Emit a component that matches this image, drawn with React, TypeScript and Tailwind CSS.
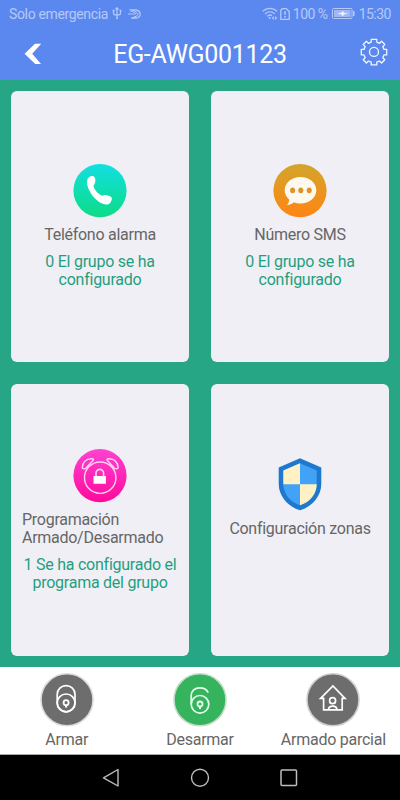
import type { ReactNode } from "react";

const PhoneIcon = () => (
  <svg className="h-[54px] w-[54px]" viewBox="0 0 54 54">
    <defs>
      <linearGradient id="phoneBg" x1="0" y1="0" x2="0" y2="1">
        <stop offset="0" stopColor="#12dfe0" />
        <stop offset="1" stopColor="#0ddc86" />
      </linearGradient>
    </defs>
    <circle cx="27" cy="26.6" r="26.6" fill="url(#phoneBg)" />
    <path
      d="M15.900 13.200c1.700-1.400 4.600-1.600 5.700 0 1.100 1.700.9 4.700.2 6.400-.3 1-1.300 1.500-1.300 2.300.5 3.300 4.500 7.900 8.100 9.600 1.300.6 2-.7 3.300-.6 2.400.1 5.700 1 6.700 2.600.9 1.500-.6 5.300-2.700 6.500-2.800 1.500-7.800-.5-10.800-2.700-5.300-3.900-10-11.200-11-17.200-.4-2.800 0-5.300 1.800-6.900z"
      fill="#fff"
    />
  </svg>
);

const SmsIcon = () => (
  <svg className="h-[54px] w-[54px]" viewBox="0 0 54 54">
    <defs>
      <linearGradient id="smsBg" x1="0" y1="0" x2="0" y2="1">
        <stop offset="0" stopColor="#d3a52c" />
        <stop offset="1" stopColor="#ff8512" />
      </linearGradient>
    </defs>
    <circle cx="27" cy="26.6" r="26.6" fill="url(#smsBg)" />
    <path
      d="M27.500 13c8.700 0 15.800 5.600 15.800 13.200s-7.100 13.300-15.800 13.300c-2.500 0-4.700-.4-6.700-1.200-1.900 1.800-4.300 2.700-6.800 2.800 1.500-1.600 2.200-3.500 2.100-5.600-2.700-2.400-4.400-5.700-4.400-9.300 0-7.600 7.100-13.200 15.800-13.200z"
      fill="#fff8ee"
    />
    <ellipse cx="19.600" cy="26.300" rx="2.500" ry="2.900" fill="#dc9428" />
    <ellipse cx="27.800" cy="26.300" rx="2.500" ry="2.900" fill="#dc9428" />
    <ellipse cx="36.200" cy="26.300" rx="2.500" ry="2.900" fill="#dc9428" />
  </svg>
);

const ScheduleIcon = () => (
  <svg className="h-[54px] w-[54px]" viewBox="0 0 54 54">
    <defs>
      <linearGradient id="scheduleBg" x1="0" y1="0" x2="0" y2="1">
        <stop offset="0" stopColor="#ff42d2" />
        <stop offset="1" stopColor="#fd0a9c" />
      </linearGradient>
    </defs>
    <circle cx="27" cy="26.600" r="26.600" fill="url(#scheduleBg)" />
    <g fill="none" stroke="#ffd6f2" strokeWidth="1.400" strokeLinejoin="round">
      <circle cx="27.200" cy="28.700" r="15.700" />
      <path d="M9.300 18.600c.2-5 3.500-8.800 8.900-8.800h1.100c1 0 1.400 1 .7 1.700l-7 7.500c-1 1-3.600 1.200-3.700-.4z" />
      <path d="M45.100 18.600c-.2-5-3.500-8.800-8.900-8.800h-1.100c-1 0-1.400 1-.7 1.700l7 7.500c1 1 3.600 1.200 3.700-.4z" />
      <path d="M23 28v-3.800a3.800 3.800 0 0 1 7.600 0V28" strokeWidth="1.600" />
    </g>
    <rect x="20.500" y="27" width="12.400" height="7.800" rx=".6" fill="#fff" />
  </svg>
);

const ShieldIcon = () => (
  <svg className="h-[54px] w-[54px]" viewBox="0 0 54 54">
    <path d="M27 .3 48.300 9.600V26c0 11.500-8.600 22.500-21.300 26.300C14.300 48.500 5.700 37.500 5.700 26V9.600z" fill="#1e78d0" />
    <path d="M27 5.300 43.700 12.600V26c0 9.500-6.500 18-16.700 21.300C16.800 44 10.300 35.500 10.300 26V12.600z" fill="#42a2f5" />
    <path d="M27 5.300v21H10.300V12.600z" fill="#fff1c4" />
    <path d="M27 26.300h16.700c0 9.500-6.500 17.700-16.700 21z" fill="#fff1c4" />
  </svg>
);

type CardProps = {
  icon: ReactNode;
  label: string;
  detail?: string;
};

const Card = ({ icon, label, detail }: CardProps) => (
  <div className="flex flex-col items-center justify-center rounded-md bg-[#f0eff5] px-[11px]">
    {icon}
    <p className="mt-2 text-[16px] leading-[18px] tracking-[-0.27px] text-[#666666]">{label}</p>
    <p className="mt-[9px] min-h-9 text-center text-[16px] leading-[18px] tracking-[-0.25px] text-[#1f9f80]">{detail}</p>
  </div>
);

const cards: CardProps[] = [
  { icon: <PhoneIcon />, label: "Teléfono alarma", detail: "0 El grupo se ha configurado" },
  { icon: <SmsIcon />, label: "Número SMS", detail: "0 El grupo se ha configurado" },
  { icon: <ScheduleIcon />, label: "Programación Armado/Desarmado", detail: "1 Se ha configurado el programa del grupo" },
  { icon: <ShieldIcon />, label: "Configuración zonas" },
];

const Keyhole = ({ x, y }: { x: number; y: number }) => (
  <g transform={`translate(${x} ${y})`}>
    <circle r="2.500" strokeWidth="1.800" />
    <path d="M0 2.500v2.400" strokeWidth="2" />
  </g>
);

const actions = [
  {
    label: "Armar",
    fill: "#6d6d6d",
    ring: "#dcdce0",
    glyph: (
      <>
        <rect x="17.200" y="12.600" width="17.800" height="26.200" rx="8.900" />
        <circle cx="26.100" cy="29.900" r="8.900" />
        <Keyhole x={26.1} y={29.7} />
      </>
    ),
  },
  {
    label: "Desarmar",
    fill: "#36b35d",
    ring: "#c4dcca",
    glyph: (
      <g stroke="#e2ffe9">
        <path d="M18.200 31V22.500c0-4.500 3.800-7.700 8.400-7.700 4.100 0 7.300 1.800 8.600 4.800" />
        <circle cx="27" cy="31.300" r="8.800" />
        <Keyhole x={27} y={31} />
      </g>
    ),
  },
  {
    label: "Armado parcial",
    fill: "#6d6d6d",
    ring: "#cfcdd4",
    glyph: (
      <>
        <path d="M17.600 36.800V25.300H14.600L26.900 13 39 25.300H36.200V36.800z" />
        <circle cx="26.600" cy="27.700" r="3" />
        <path d="M22.400 36.500c.3-2.300 2-3.400 4.300-3.400s4 1.100 4.300 3.400" />
      </>
    ),
  },
];

const StatusBar = () => (
  <div className="flex h-[27px] items-center justify-between px-[9px] text-[14px] leading-none text-[#b5c8f8]">
    <div className="flex items-center">
      <span className="tracking-[-0.35px]">Solo emergencia</span>
      <svg className="ml-1 h-[13px] w-[10px]" viewBox="0 0 10 13" fill="none" stroke="currentColor" strokeWidth="1.200">
        <path d="M5 1v10M1.500 4v2.200c0 1 .8 1.700 1.700 1.700h3.600c.9 0 1.700-.7 1.700-1.700V4M3.500 2.500 5 .8l1.500 1.700" />
        <path d="M.6 3.700h1.800M7.600 3.700h1.800" strokeWidth="1.800" />
        <circle cx="5" cy="11.300" r="1" fill="currentColor" stroke="none" />
      </svg>
      <svg className="ml-[6px] h-[10px] w-[13px]" viewBox="0 0 13 10" fill="none" stroke="currentColor">
        <path d="M1.500.8h6c2.900.4 4.700 2 4.700 4.200s-2 3.900-4.700 4.200H3c2.500-.3 4-1.200 4.500-2.300" strokeWidth="1.300" />
        <path d="M2.500 2.300c3 0 4.500 1 5.500 2.700M0 5h7.500M4 1.500c3.500.5 5 1.500 6 3.500-.5 1.600-1.500 2.500-3 3" />
      </svg>
    </div>
    <div className="flex items-center tracking-[-0.5px]">
      <svg className="h-[13px] w-4" viewBox="0 0 16 13" fill="none" stroke="currentColor" strokeWidth="1.300">
        <path d="M.7 4.300c4.200-4 10.200-4 14.400 0M3 6.900c3-2.700 7-2.700 9.800 0M5.200 9.300c1.500-1.400 3.500-1.500 4.700-.7" />
        <circle cx="7.700" cy="11" r="1" fill="currentColor" stroke="none" />
        <path d="M11.800 9v4L9.700 11zM13 9v4l2.100-2z" fill="currentColor" stroke="none" />
      </svg>
      <svg className="ml-[2px] h-3 w-[10px]" viewBox="0 0 10 12" fill="none" stroke="currentColor" strokeWidth="1.300">
        <path d="M2.200.7H6.300l2.900 2.900v7.700H.8V2.200z" />
        <path d="M5 3.300v3.500M5 8.100v1.500" strokeWidth="1.600" />
      </svg>
      <span className="ml-[3px]">100 %</span>
      <svg className="ml-1 h-[11px] w-[23px]" viewBox="0 0 23 11">
        <rect x=".5" y=".5" width="19.500" height="10" rx="1" fill="none" stroke="currentColor" />
        <rect x="2" y="2" width="16.500" height="7" fill="#9eb7f5" />
        <path d="M5.500 5.700 10 4.200 11 2.500l1 2.200 4 .7-4 1.200-1.500 2-1-2z" fill="#edf2ff" />
        <rect x="21" y="3" width="1.500" height="5" fill="currentColor" />
      </svg>
      <span className="ml-1">15:30</span>
    </div>
  </div>
);

const Header = () => (
  <header className="h-20 bg-[#5b88ef]">
    <StatusBar />
    <div className="flex h-[53px] items-center justify-between pl-6 pr-3">
      <svg className="h-[22px] w-[28px]" viewBox="0 0 28 22">
        <path d="M11 .8h6.200L8.200 10.800 17 21h-5.800L.6 10.800z" fill="#fff" />
      </svg>
      <h1 className="mr-3 mt-px text-[25px] leading-none tracking-[-0.3px] text-white">EG-AWG001123</h1>
      <svg className="mb-1 h-7 w-7" viewBox="0 0 28 28" fill="none" stroke="#f2f6ff" strokeWidth="1.300" strokeLinejoin="round">
        <path d="M11.200 1.300h5.600v2.800l2.800 1.200 2-2 3.200 3.200-2 2.100 1.200 2.800h2.700v5.500h-2.700l-1.200 2.900 2 2-3.200 3.200-2.100-2-2.700 1.200v2.700h-5.600v-2.700l-2.800-1.200-2 2-3.200-3.200 2-2-1.200-2.900H1.300v-5.500H4l1.200-2.800-2-2.100 3.200-3.200 2 2 2.800-1.200z" />
        <circle cx="14" cy="13.900" r="4.500" />
      </svg>
    </div>
  </header>
);

export default function App() {
  return (
    <div className="flex h-[800px] w-[400px] flex-col overflow-hidden font-['Roboto',sans-serif]">
      <Header />

      <main className="grid h-[587px] grid-cols-2 grid-rows-[271px_272px] gap-[22px] bg-[#27a685] px-[11px] pt-[11px]">
        {cards.map((card) => (
          <Card key={card.label} {...card} />
        ))}
      </main>

      <footer className="grid h-[88px] grid-cols-3 border-b border-[#a8a8a8] bg-white pt-[6px]">
        {actions.map((action) => (
          <div key={action.label} className="flex flex-col items-center">
            <svg className="h-[54px] w-[54px]" viewBox="0 0 54 54" fill="none" stroke="#fff" strokeWidth="1.700">
              <circle cx="27" cy="26.800" r="26" fill={action.fill} stroke={action.ring} strokeWidth="1.600" />
              {action.glyph}
            </svg>
            <span className="mt-1 whitespace-nowrap text-[16px] leading-[18px] tracking-[-0.25px] text-[#666666]">{action.label}</span>
          </div>
        ))}
      </footer>

      <nav className="flex h-[45px] items-center justify-between bg-black pl-[102px] pr-[102px]">
        <svg className="h-5 w-[18px]" viewBox="0 0 18 20" fill="none" stroke="#bdbdbd" strokeWidth="1.400" strokeLinejoin="round">
          <path d="M16 1.500v16.500L1.500 9.800z" />
        </svg>
        <svg className="h-5 w-5" viewBox="0 0 20 20" fill="none" stroke="#bdbdbd" strokeWidth="1.400">
          <circle cx="10" cy="9.800" r="8.500" />
        </svg>
        <svg className="h-5 w-[18px]" viewBox="0 0 18 20" fill="none" stroke="#bdbdbd" strokeWidth="1.500">
          <rect x="1" y="2" width="15.500" height="15.500" rx="1" />
        </svg>
      </nav>
    </div>
  );
}
